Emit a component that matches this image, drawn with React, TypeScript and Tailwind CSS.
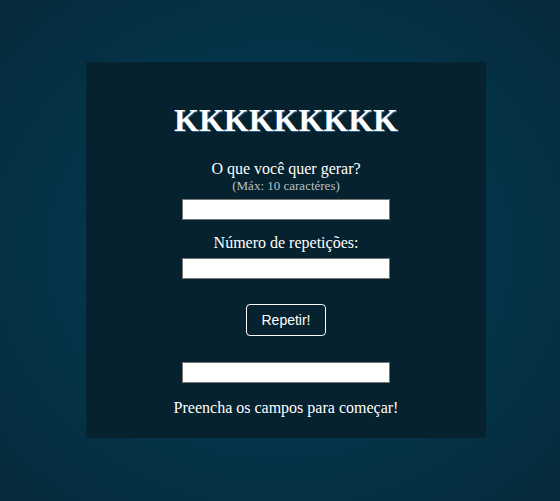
import React from "react";

export default function App() {
  const serif = { fontFamily: '"Liberation Serif", "Times New Roman", serif' };
  return (
    <div
      className="w-[560px] h-[501px] overflow-hidden pt-[62px] pl-[86px]"
      style={{ background: "radial-gradient(ellipse at 50% 50%, #033c54 0%, #03364c 45%, #062a3b 100%)" }}
    >
      <div className="w-[400px] h-[376px] bg-[#07222f] flex flex-col items-center pt-[40px] text-white" style={serif}>
        <h1 className="text-[32px] leading-[37px] font-bold [text-shadow:1px_1px_0_#2a5f8a]">KKKKKKKKK</h1>
        <div className="mt-[21px] text-[16px] leading-[18px]">O que você quer gerar?</div>
        <div className="text-[13px] leading-[15px] text-[#b8c0c4]">(Máx: 10 caractéres)</div>
        <input className="mt-[6px] w-[208px] h-[21px] bg-white border border-[#767676] text-black" />
        <div className="mt-[14px] text-[16px] leading-[18px]">Número de repetições:</div>
        <input className="mt-[6px] w-[208px] h-[21px] bg-white border border-[#767676] text-black" />
        <button
          className="mt-[25px] w-[80px] h-[32px] border border-white rounded-[4px] text-[14px] text-white bg-transparent"
          style={{ fontFamily: '"Liberation Sans", Arial, sans-serif' }}
        >
          Repetir!
        </button>
        <input className="mt-[26px] w-[208px] h-[21px] bg-white border border-[#767676] text-black" />
        <div className="mt-[16px] text-[16px] leading-[18px]">Preencha os campos para começar!</div>
      </div>
    </div>
  );
}
